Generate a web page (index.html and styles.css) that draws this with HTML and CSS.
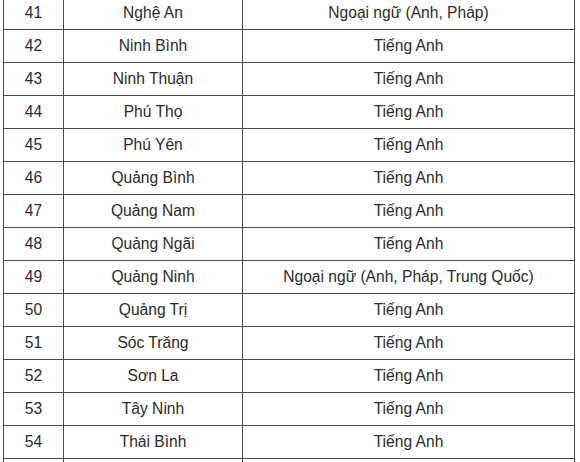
FILE: index.html
```html
<!DOCTYPE html>
<html lang="vi">
<head>
<meta charset="utf-8">
<link rel="stylesheet" href="styles.css">
</head>
<body>
<div class="wrap">
<table class="grid">
<colgroup><col class="c1"><col class="c2"><col class="c3"></colgroup>
<tbody>
<tr><td>41</td><td>Nghệ An</td><td>Ngoại ngữ (Anh, Pháp)</td></tr>
<tr><td>42</td><td>Ninh Bình</td><td>Tiếng Anh</td></tr>
<tr><td>43</td><td>Ninh Thuận</td><td>Tiếng Anh</td></tr>
<tr><td>44</td><td>Phú Thọ</td><td>Tiếng Anh</td></tr>
<tr><td>45</td><td>Phú Yên</td><td>Tiếng Anh</td></tr>
<tr><td>46</td><td>Quảng Bình</td><td>Tiếng Anh</td></tr>
<tr><td>47</td><td>Quảng Nam</td><td>Tiếng Anh</td></tr>
<tr><td>48</td><td>Quảng Ngãi</td><td>Tiếng Anh</td></tr>
<tr><td>49</td><td>Quảng Ninh</td><td>Ngoại ngữ (Anh, Pháp, Trung Quốc)</td></tr>
<tr><td>50</td><td>Quảng Trị</td><td>Tiếng Anh</td></tr>
<tr><td>51</td><td>Sóc Trăng</td><td>Tiếng Anh</td></tr>
<tr><td>52</td><td>Sơn La</td><td>Tiếng Anh</td></tr>
<tr><td>53</td><td>Tây Ninh</td><td>Tiếng Anh</td></tr>
<tr><td>54</td><td>Thái Bình</td><td>Tiếng Anh</td></tr>
<tr><td></td><td></td><td></td></tr>
</tbody>
</table>
</div>
</body>
</html>
```
FILE: styles.css
```css
html, body {
  margin: 0;
  padding: 0;
  background: #ffffff;
}
.wrap {
  padding-left: 3px;
  height: 462px;
  overflow: hidden;
}
.grid {
  margin-top: -4px;
  border-collapse: collapse;
  table-layout: fixed;
  width: 571px;
  font-family: "Liberation Sans", Arial, sans-serif;
  font-size: 15.6px;
  color: #2b2b2b;
}
.c1 { width: 60px; }
.c2 { width: 179px; }
.c3 { width: 332px; }
.grid td {
  border: 1px solid #4a4a4a;
  height: 32px;
  padding: 0;
  text-align: center;
  vertical-align: middle;
  box-sizing: border-box;
  line-height: 18px;
}
.grid tr { height: 33px; }
```
